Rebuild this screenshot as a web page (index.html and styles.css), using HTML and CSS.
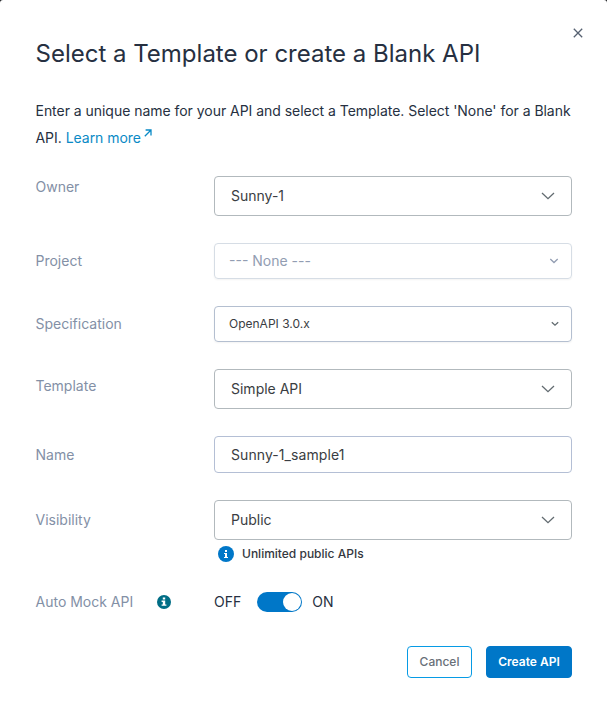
FILE: index.html
```html
<!DOCTYPE html>
<html lang="en">
<head>
<meta charset="utf-8">
<title>Create API</title>
<link rel="stylesheet" href="styles.css">
</head>
<body>
<main class="dialog">
  <button class="close" aria-label="Close"><svg width="10" height="10" viewBox="0 0 10 10"><path d="M.8.8l8.4 8.4M9.2.8L.8 9.2"/></svg></button>
  <h1 class="title">Select a Template or create a Blank API</h1>
  <p class="intro">Enter a unique name for your API and select a Template. Select 'None' for a Blank<br>API. <a class="link">Learn more<svg class="ext" width="8" height="8" viewBox="0 0 8 8"><path d="M1.6 1H7v5.4M7 1L.8 7.2"/></svg></a></p>
  <form class="form">
    <div class="row">
      <label class="label label-owner">Owner</label>
      <div class="field tall"><span>Sunny-1</span><svg class="chevron" width="14" height="8" viewBox="0 0 14 8"><path d="M1 1l6 5.7L13 1"/></svg></div>
    </div>
    <div class="row">
      <label class="label">Project</label>
      <div class="field native disabled"><span>--- None ---</span><svg class="chevron" width="10" height="6" viewBox="0 0 10 6"><path d="M1.3 1L5 4.5 8.7 1"/></svg></div>
    </div>
    <div class="row">
      <label class="label">Specification</label>
      <div class="field native small"><span>OpenAPI 3.0.x</span><svg class="chevron" width="8" height="6" viewBox="0 0 8 6"><path d="M.8 1.2L4 4.2l3.2-3"/></svg></div>
    </div>
    <div class="row">
      <label class="label label-template">Template</label>
      <div class="field tall"><span>Simple API</span><svg class="chevron" width="14" height="8" viewBox="0 0 14 8"><path d="M1 1l6 5.7L13 1"/></svg></div>
    </div>
    <div class="row">
      <label class="label">Name</label>
      <div class="field input"><span>Sunny-1_sample1</span></div>
    </div>
    <div class="row">
      <label class="label">Visibility</label>
      <div class="field tall"><span>Public</span><svg class="chevron" width="14" height="8" viewBox="0 0 14 8"><path d="M1 1l6 5.7L13 1"/></svg></div>
    </div>
  </form>
  <div class="note">
    <svg width="16" height="16" viewBox="0 0 16 16"><circle cx="8" cy="8" r="8" fill="#0077c8"/><path fill="#fff" d="M7 4h2v2H7zM6 7h3v4h1v1H6v-1h1V8H6z"/></svg>
    <span>Unlimited public APIs</span>
  </div>
  <div class="mock">
    <span class="mock-label">Auto Mock API</span>
    <svg class="mock-info" width="14" height="14" viewBox="0 0 14 14"><circle cx="7" cy="7" r="7" fill="#006d85"/><path fill="#fff" d="M5.8 2.4h2.4v2H5.8zM4.6 5.6h3.6v3.8h1.2v1.4H4.6V9.4h1.2V7H4.6z"/></svg>
    <span>OFF</span>
    <span class="switch"><span class="knob"></span></span>
    <span>ON</span>
  </div>
  <footer class="actions">
    <button class="btn cancel">Cancel</button>
    <button class="btn create">Create API</button>
  </footer>
</main>
</body>
</html>
```
FILE: styles.css
```css
* { box-sizing: border-box; }
body {
  margin: 0;
  background: #1b1d20;
  font-family: Inter, "Liberation Sans", sans-serif;
  font-size: 14px;
  color: #263041;
}
.dialog {
  position: relative;
  height: 711px;
  padding: 38px 35px 0 35.5px;
  background: #fff;
  border-radius: 3px 3px 0 0;
}
svg { display: block; fill: none; flex: none; }
button { font-family: inherit; }
.close {
  position: absolute;
  top: 28px;
  right: 24px;
  padding: 0;
  border: 0;
  background: none;
}
.close svg { stroke: #566171; stroke-width: 1.3; }
.title {
  margin: 0;
  font-size: 24px;
  line-height: 32px;
  font-weight: 400;
  white-space: nowrap;
}
.intro {
  margin: 27px 0 0;
  line-height: 27px;
  letter-spacing: -0.035px;
  white-space: nowrap;
}
.link { color: #0a8ac6; }
.ext {
  display: inline-block;
  margin-left: 3px;
  vertical-align: 6px;
  stroke: #0a8ac6;
  stroke-width: 1.3;
}
.form {
  display: grid;
  gap: 27px;
  margin-top: 25px;
}
.row {
  display: grid;
  grid-template-columns: 178.5px 1fr;
  align-items: center;
}
.label, .mock-label { color: #8390a6; }
.label { line-height: 20px; }
.label-owner { align-self: start; margin-top: 1px; }
.label-template { align-self: start; margin-top: 7px; }
.field {
  display: flex;
  align-items: center;
  justify-content: space-between;
  border: 1px solid #b2b9bd;
  border-radius: 4px;
  color: #3a3d42;
  line-height: 20px;
}
.tall { height: 40px; padding: 0 16px; }
.tall span, .native span { padding-bottom: 1px; }
.input span { letter-spacing: 0.08px; }
.chevron { stroke: #626b70; stroke-width: 1.3; }
.native {
  height: 36px;
  padding: 0 12px 0 14px;
  border-color: #b4bfd0;
  box-shadow: 0 1px 2px #0000000d;
}
.disabled { border-color: #d6dde5; color: #929db2; }
.disabled .chevron { stroke: #929db2; }
.small { font-size: 12px; }
.input { height: 37px; padding: 0 16px; border-color: #b4bfd5; }
.note {
  display: flex;
  align-items: center;
  gap: 8px;
  height: 16px;
  margin: 6px 0 0 182.5px;
  font-size: 12px;
  line-height: 14px;
  font-weight: 500;
  color: #34383e;
}
.note span { padding-bottom: 1px; }
.mock {
  display: flex;
  align-items: center;
  height: 20px;
  margin-top: 30px;
  line-height: 18px;
}
.mock > span:not(.switch) { padding-bottom: 1px; }
.mock-label { width: 121.5px; }
.mock-info { margin-right: 43px; }
.switch {
  display: flex;
  justify-content: flex-end;
  width: 45px;
  height: 20px;
  margin: 0 10px 0 16px;
  padding: 1px;
  border-radius: 10px;
  background: #0077c8;
}
.knob {
  width: 18px;
  height: 18px;
  border-radius: 50%;
  background: #fff;
}
.actions {
  display: flex;
  justify-content: flex-end;
  gap: 14px;
  margin-top: 34px;
}
.btn {
  height: 32px;
  padding: 0 0 2px;
  border: 1px solid #0077c8;
  border-radius: 4px;
  font-size: 12px;
}
.cancel {
  width: 65px;
  border-color: #079be5;
  background: #fff;
  color: #697078;
  font-weight: 500;
}
.create {
  width: 86px;
  background: #0077c8;
  color: #fff;
  font-weight: 600;
}
```
